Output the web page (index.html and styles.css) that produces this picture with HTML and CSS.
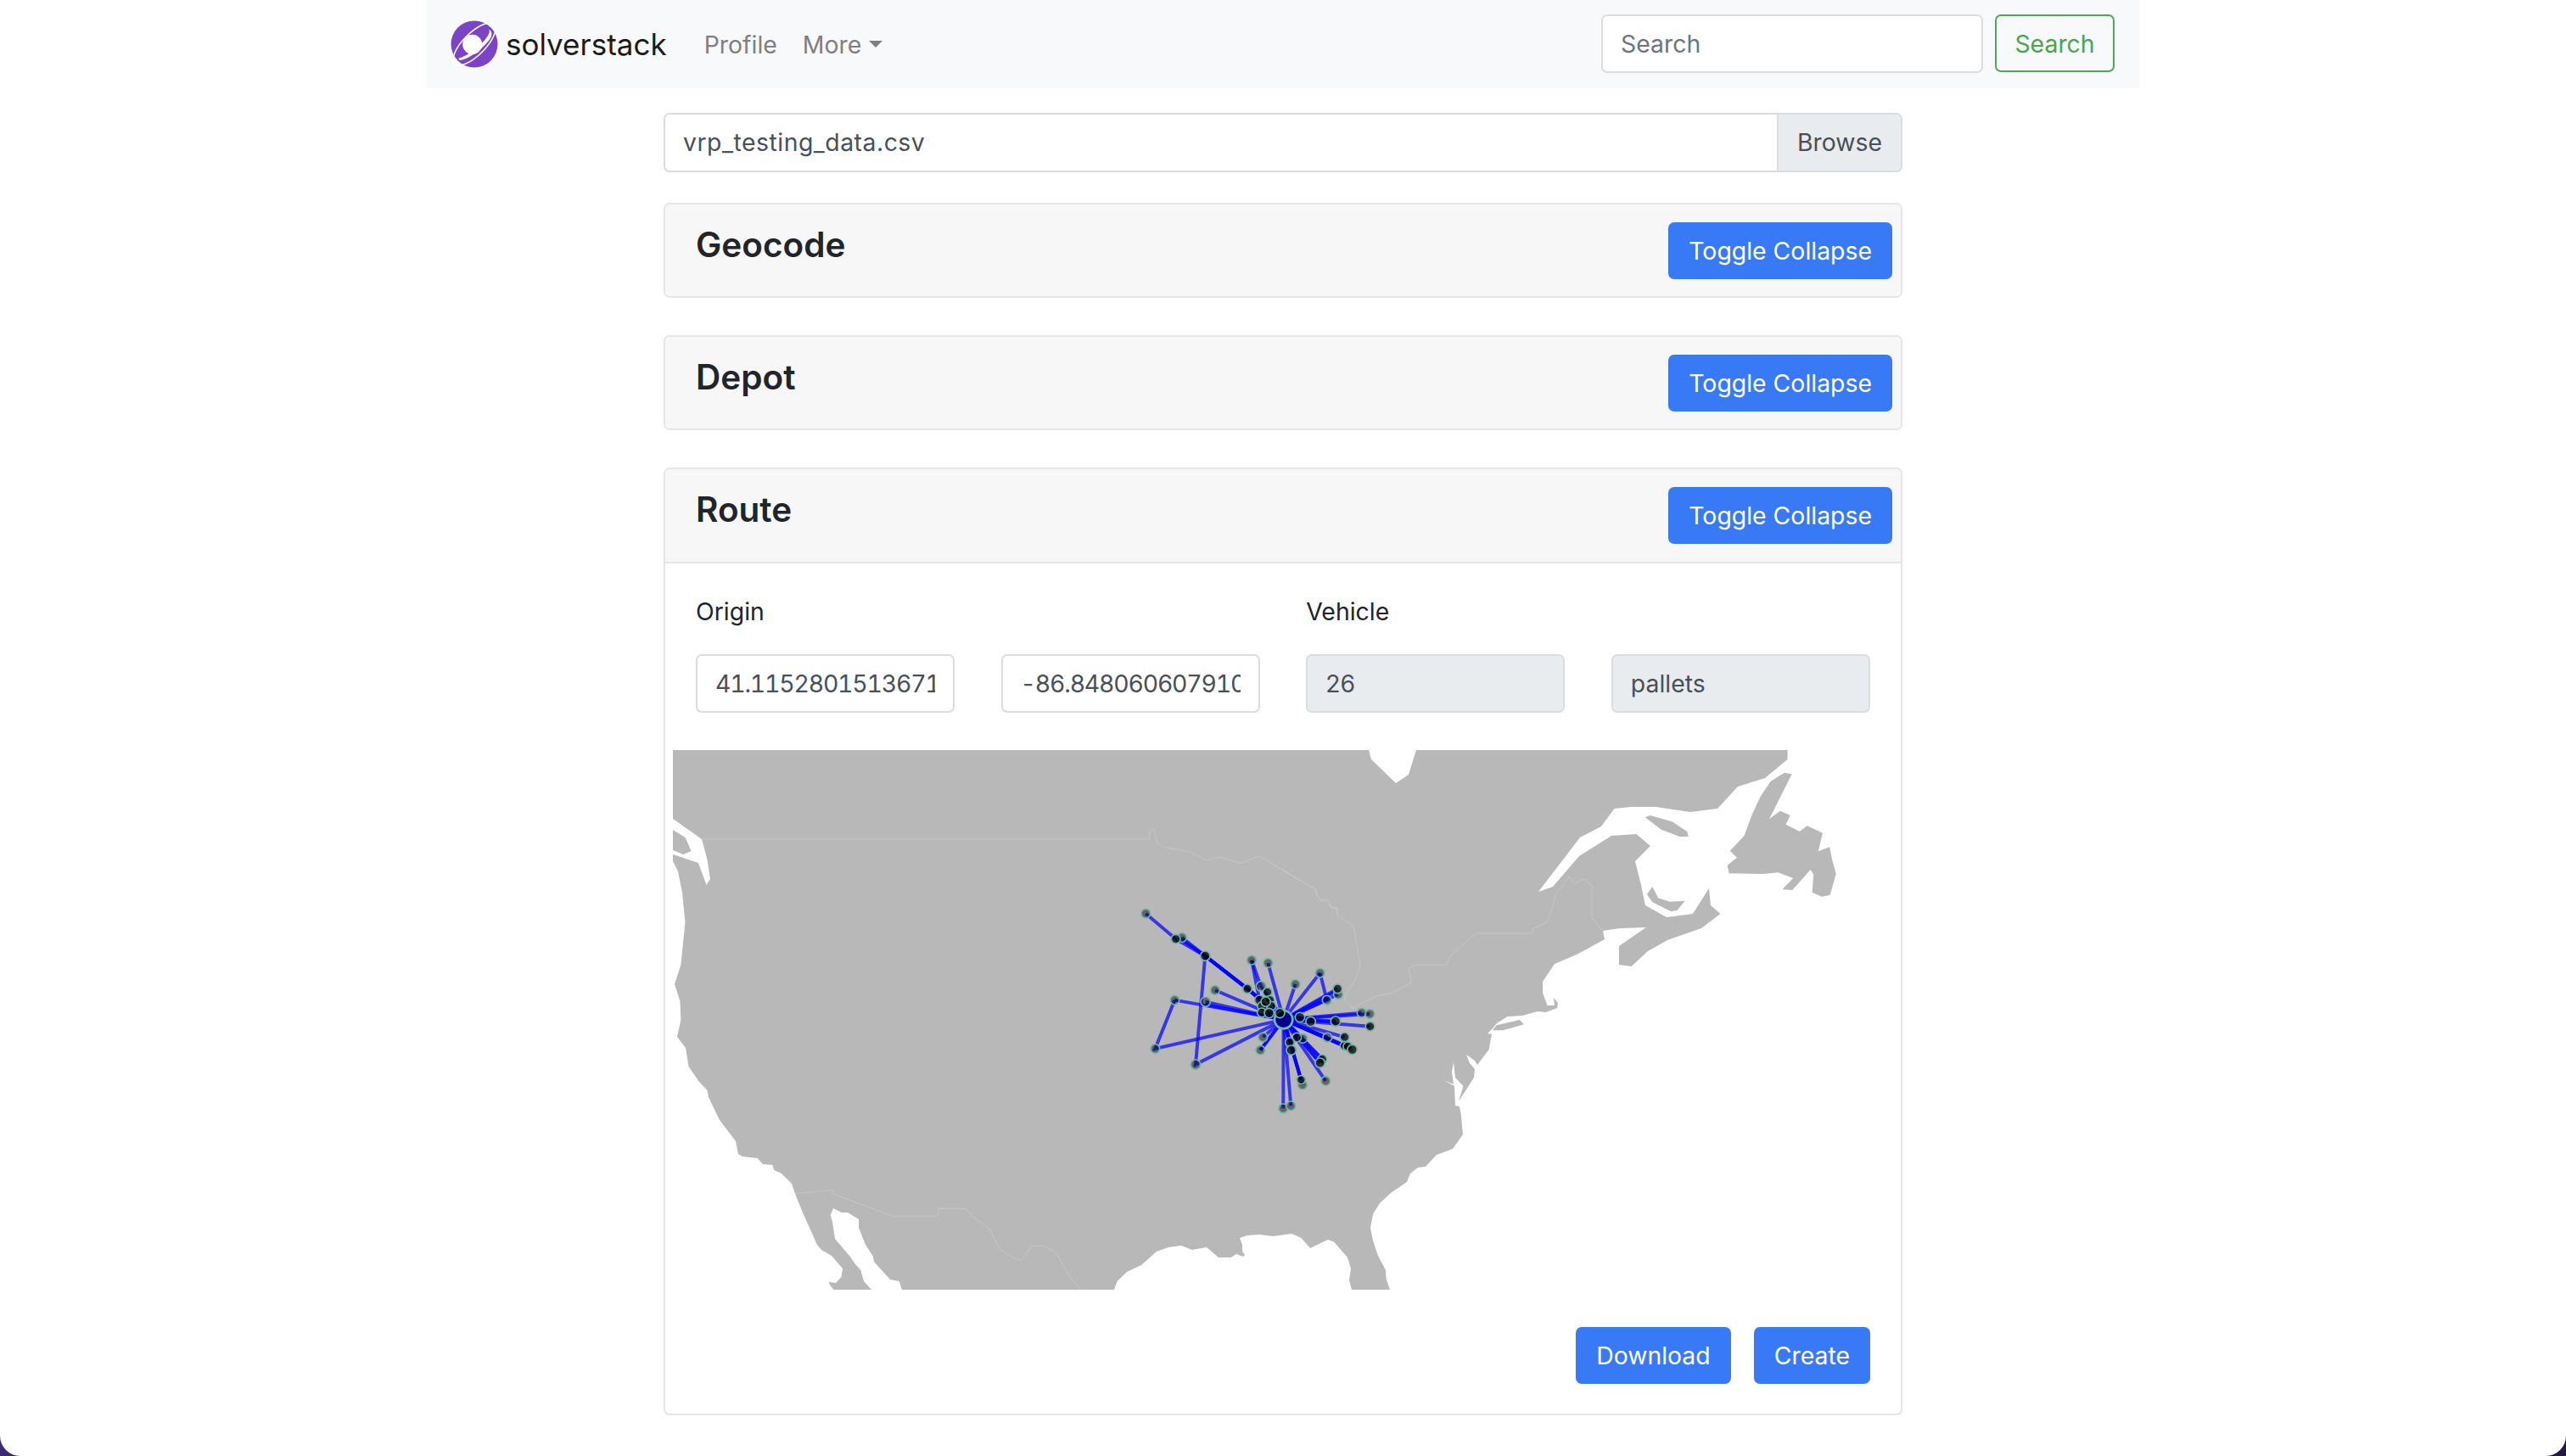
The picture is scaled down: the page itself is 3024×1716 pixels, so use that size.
FILE: index.html
```html
<!DOCTYPE html>
<html lang="en">
<head>
<meta charset="utf-8">
<title>solverstack</title>
<link rel="stylesheet" href="styles.css">
</head>
<body>
<div class="screen">
  <nav class="navbar">
    <a class="brand">
      <svg class="logo" viewBox="0 0 56 56" aria-hidden="true">
        <circle cx="28" cy="28" r="27.5" fill="#7d43c6"/>
        <ellipse cx="28" cy="28" rx="33" ry="13" transform="rotate(-45 28 28)" fill="none" stroke="#fff" stroke-width="1.6"/>
        <circle cx="25.7" cy="28.3" r="11.5" fill="#fff"/>
        <path d="M9 45 C20 42 36 31 44 18 C47 13 46 11 43 10 L47 12 C50 16 48 21 44 25 C35 36 20 46 11 47Z" fill="#fff"/>
      </svg>
      <span class="brand-name">solverstack</span>
    </a>
    <a class="nav-link">Profile</a>
    <a class="nav-link">More<span class="caret"></span></a>
    <form class="nav-search">
      <input class="field field-search" type="text" placeholder="Search">
      <button class="btn btn-outline" type="button">Search</button>
    </form>
  </nav>

  <main class="main">
    <div class="file-input">
      <span class="file-name">vrp_testing_data.csv</span>
      <span class="file-browse">Browse</span>
    </div>

    <section class="card">
      <header class="card-header">
        <h4 class="card-title">Geocode</h4>
        <button class="btn btn-primary" type="button">Toggle Collapse</button>
      </header>
    </section>

    <section class="card">
      <header class="card-header">
        <h4 class="card-title">Depot</h4>
        <button class="btn btn-primary" type="button">Toggle Collapse</button>
      </header>
    </section>

    <section class="card">
      <header class="card-header card-header-open">
        <h4 class="card-title">Route</h4>
        <button class="btn btn-primary" type="button">Toggle Collapse</button>
      </header>
      <div class="card-body">
        <div class="form-grid">
          <label class="form-label">Origin</label>
          <label class="form-label">Vehicle</label>
          <input class="field field-number" type="text" value="41.11528015136719">
          <input class="field field-number" type="text" value="-86.84806060791016">
          <input class="field" type="text" value="26" disabled>
          <input class="field" type="text" value="pallets" disabled>
        </div>

        <svg class="map" viewBox="792 884 1373 636" aria-hidden="true">
          <polygon class="land" points="792,884 1612,884 1615,895 1644,923 1659,913 1668,884 2105.6,884 2105.6,895 2079,917 2047,927 2023,953 1991,957 1950.5,951 1921,951 1901.5,953 1886,974 1861,987 1812,1051 1829,1045 1860,1009 1898,985 1927.5,983 1944,997 1926,1015 1933,1043 1938,1067 1963,1081 1994,1077 2013,1047 2015,1067 2026.5,1077 2004,1094 1964,1108 1941,1121 1921.5,1139 1907,1137 1907,1115 1939,1093 1908,1094 1888,1097 1890,1107 1872,1117 1857,1125 1831,1136 1817,1157 1817,1170 1822.5,1185 1831,1185 1830,1176 1835,1182 1834,1188 1821,1193 1811,1192 1793,1197 1775.5,1198 1763,1206 1758,1212 1752,1218 1757,1219 1753.6,1237 1740,1255 1737,1250 1727,1243 1731,1253 1737,1260 1736,1270 1718,1298 1723.5,1280 1714,1270 1712,1252 1710,1263 1712,1278 1700.5,1273 1713,1280 1714,1303 1719,1304 1720.7,1313 1723,1337 1711,1354 1692,1361 1679,1375 1670,1376 1661,1383 1657,1393 1638,1406 1625,1418 1617,1431 1614,1447 1617,1462 1623,1480 1632,1497 1632.6,1507 1637,1520 1592,1520 1589,1509 1591,1495 1587,1482 1571.5,1464 1564,1461 1543,1471 1532.5,1459 1521,1454 1499,1457 1483,1455 1469,1456 1460,1459 1463,1467 1463,1475 1466,1479 1464,1481 1456,1478 1449.6,1482 1435,1482 1421,1470 1403.7,1473 1391,1468 1376,1470 1362,1475 1344,1491 1327,1499 1315.7,1510 1312,1520 1062,1520 1058.7,1510 1048,1508 1029,1487 1027.5,1480 1019,1467 1011,1447 1011,1437 998,1429 990.5,1429 981,1424 977.7,1432 980,1440 983,1460 1000,1480 1007,1490 1013.4,1497 1017,1510 1026,1520 981.5,1520 976,1513 976,1511 984,1512 990.5,1505 992,1495 979,1480 967,1473 962,1467 944.5,1428 936,1407 932,1395 920,1383 911,1379 909.5,1373 898,1372 891.6,1365 874,1363 869,1360 866,1345 847,1320 834,1293 832.5,1285 823,1275 810.6,1257 807,1235 797,1222 801.4,1202 800.4,1180 794,1160 801.4,1137 806.5,1087 803,1052 798,1027 792,1015 792,1007 822,1017 831.5,1043 836,1036 832.5,1013 826,989 792,965"/>
          <polygon class="land" points="792,978 806.5,987 813.7,1003 804.5,1007 792,1002"/>
          <g transform="translate(1500 880) scale(.5102 .3333)">
            <polygon class="land" points="858,250 870,243 920,265 955,300 958,318 938,318 895,293"/>
            <polygon class="land" points="875,495 888,535 915,548 950,545 932,578 918,583 875,550 862,522"/>
            <polygon class="land" points="1180,92 1197,97 1145,255 1170,227 1193,243 1183,275 1215,300 1232,280 1268,305 1258,370 1284,355 1290,400 1299,450 1285,525 1266,530 1244,515 1247,452 1240,435 1198,507 1175,505 1200,465 1165,445 1130,450 1052,448 1048,420 1070,392 1054,368 1087,315 1105,240 1125,175 1148,122"/>
            <polygon class="land" points="505,1003 530,1003 578,982 568,966 515,985"/>
            <polyline class="border" points="0,418 98,505 100,525 110,545 125,540 130,565 148,572 146,595 185,635 200,775 188,825 165,880 165,900 183,925 235,882 268,873 318,835 312,785 327,772 398,772 410,738 455,675 470,660 597,660 600,642 630,622 640,590 652,522 682,460 695,482 717,468 735,490 735,605 760,652"/>
          </g>
          <g transform="translate(780 880) scale(.5102 .3333)">
            <polyline class="border" points="90,327 1125,327 1125,295 1135,293 1143,340 1155,355 1218,372 1255,402 1287,390 1335,412 1378,387 1508,505 1510,525 1523,547 1535,540 1545,570 1557,573 1560,600"/>
          </g>
          <g transform="translate(780 1280) scale(.6378 .3333)">
            <polyline class="border" points="245,380 315,368 313,380 425,460 508,460 510,433 560,433 575,465 605,508 622,575 638,597 662,617 682,565 706,565 728,592 752,675 765,700 771,720"/>
          </g>
          <g transform="translate(1300 1040) scale(.3333)">
            <g class="routes">
              <path d="M148 110L254 200L358 260L507 376L635 485"/>
              <path d="M276 195L358 260L507 376L635 485"/>
              <path d="M265 195L358 260L507 376L635 485"/>
              <path d="M358 260L324 644L635 485"/>
              <path d="M358 260L520 385L635 485"/>
              <path d="M522 275L555 367L635 485"/>
              <path d="M522 275L550 416"/>
              <path d="M580 285L635 485"/>
              <path d="M677 360L635 485"/>
              <path d="M764 320L635 485"/>
              <path d="M764 320L788 416L635 485"/>
              <path d="M393 381L635 485"/>
              <path d="M359 422L635 485"/>
              <path d="M359 432L635 485"/>
              <path d="M250 416L635 485"/>
              <path d="M250 416L181 588L635 485"/>
              <path d="M826 376L635 485"/>
              <path d="M828 396L635 485"/>
              <path d="M820 385L635 485"/>
              <path d="M911 461L635 485"/>
              <path d="M940 465L635 485"/>
              <path d="M941 509L635 485"/>
              <path d="M819 491L635 485"/>
              <path d="M819 491L635 485"/>
              <path d="M731 492L635 485"/>
              <path d="M693 477L635 485"/>
              <path d="M851 547L635 485"/>
              <path d="M878 591L635 485"/>
              <path d="M878 591L635 485"/>
              <path d="M862 580L635 485"/>
              <path d="M850 578L635 485"/>
              <path d="M790 548L635 485"/>
              <path d="M772 625L635 485"/>
              <path d="M772 625L635 485"/>
              <path d="M764 638L635 485"/>
              <path d="M764 638L635 485"/>
              <path d="M703 552L635 485"/>
              <path d="M784 702L635 485"/>
              <path d="M697 698L635 485"/>
              <path d="M697 698L635 485"/>
              <path d="M702 716L635 485"/>
              <path d="M634 799L635 485"/>
              <path d="M661 790L635 485"/>
              <path d="M562 547L635 485"/>
              <path d="M553 593L635 485"/>
              <path d="M553 593L635 485"/>
              <path d="M600 470L635 485"/>
              <path d="M560 450L635 485"/>
              <path d="M585 440L635 485"/>
              <path d="M560 430L635 485"/>
            </g>
            <circle class="depot" cx="635" cy="485" r="32"/>
            <g class="nodes">
              <circle cx="148" cy="110" r="16"/>
              <circle cx="276" cy="195" r="16"/>
              <circle cx="522" cy="275" r="16"/>
              <circle cx="580" cy="285" r="16"/>
              <circle cx="764" cy="320" r="16"/>
              <circle cx="677" cy="360" r="16"/>
              <circle cx="393" cy="381" r="16"/>
              <circle cx="250" cy="416" r="16"/>
              <circle cx="359" cy="422" r="17"/>
              <circle cx="555" cy="367" r="17"/>
              <circle cx="828" cy="396" r="16"/>
              <circle cx="788" cy="416" r="16"/>
              <circle cx="911" cy="461" r="16"/>
              <circle cx="940" cy="465" r="16"/>
              <circle cx="790" cy="548" r="16"/>
              <circle cx="703" cy="552" r="16"/>
              <circle cx="562" cy="547" r="16"/>
              <circle cx="553" cy="593" r="16"/>
              <circle cx="784" cy="702" r="16"/>
              <circle cx="634" cy="799" r="16"/>
              <circle cx="661" cy="790" r="16"/>
              <circle cx="181" cy="588" r="16"/>
              <circle cx="324" cy="644" r="17"/>
              <circle cx="702" cy="716" r="16"/>
            </g>
            <g class="nodes nodes-dark">
              <circle cx="254" cy="200" r="16"/>
              <circle cx="358" cy="260" r="17"/>
              <circle cx="507" cy="376" r="16"/>
              <circle cx="578" cy="388" r="16"/>
              <circle cx="550" cy="416" r="17"/>
              <circle cx="587" cy="416" r="16"/>
              <circle cx="592" cy="437" r="16"/>
              <circle cx="560" cy="438" r="17"/>
              <circle cx="558" cy="460" r="16"/>
              <circle cx="572" cy="422" r="17"/>
              <circle cx="584" cy="462" r="17"/>
              <circle cx="622" cy="462" r="17"/>
              <circle cx="826" cy="376" r="16"/>
              <circle cx="693" cy="477" r="17"/>
              <circle cx="731" cy="492" r="17"/>
              <circle cx="819" cy="491" r="17"/>
              <circle cx="941" cy="509" r="16"/>
              <circle cx="851" cy="547" r="16"/>
              <circle cx="682" cy="548" r="16"/>
              <circle cx="657" cy="565" r="16"/>
              <circle cx="662" cy="593" r="17"/>
              <circle cx="772" cy="625" r="16"/>
              <circle cx="764" cy="638" r="17"/>
              <circle cx="697" cy="698" r="15"/>
              <circle cx="850" cy="578" r="15"/>
              <circle cx="862" cy="580" r="16"/>
              <circle cx="878" cy="591" r="17"/>
            </g>
          </g>
        </svg>

        <div class="actions">
          <button class="btn btn-primary" type="button">Download</button>
          <button class="btn btn-primary" type="button">Create</button>
        </div>
      </div>
    </section>
  </main>
</div>
</body>
</html>
```
FILE: styles.css
```css
* { box-sizing: border-box; }

html, body { margin: 0; padding: 0; }

body {
  background: linear-gradient(90deg, #3d2a74 0, #241a44 100%);
  font-family: Inter, "Liberation Sans", sans-serif;
  font-size: 28.4px;
  color: #212529;
}

.screen {
  height: 1716px;
  overflow: hidden;
  background: #fff;
  border-radius: 0 0 24px 24px;
}

.navbar {
  width: 2018px;
  height: 104px;
  margin: 0 auto;
  padding: 0 29px 0 28px;
  display: flex;
  align-items: center;
  background: #f8f9fa;
}

.brand {
  display: flex;
  align-items: center;
  gap: 9px;
  margin-right: 44px;
}

.logo { width: 56px; height: 56px; display: block; }

.brand-name { font-size: 35px; color: #1b1b1b; }

.nav-link {
  margin-right: 30px;
  color: #7f7f7f;
  display: flex;
  align-items: center;
}

.caret {
  width: 0;
  height: 0;
  margin-left: 9px;
  border-top: 8px solid #7f7f7f;
  border-left: 8px solid transparent;
  border-right: 8px solid transparent;
}

.nav-search {
  margin-left: auto;
  margin-bottom: 1px;
  display: flex;
  gap: 14px;
}

.field {
  width: 100%;
  height: 69px;
  padding: 0 21px;
  border: 2px solid #dadce0;
  border-radius: 7px;
  background: #fff;
  color: #495057;
  font: inherit;
  outline: none;
}

.field-number {
  font-variant-numeric: tabular-nums;
  letter-spacing: -1.2px;
}

.field::placeholder { color: #6c757d; opacity: 1; }

.field:disabled { background: #e9ecef; color: #495057; opacity: 1; }

.field-search { width: 450px; }

.btn {
  height: 67px;
  padding: 0 22px;
  border: 2px solid transparent;
  border-radius: 7px;
  font: inherit;
  white-space: nowrap;
}

.btn-primary { background: #387af6; color: #fff; }

.btn-outline {
  width: 141px;
  height: 68px;
  padding: 0;
  background: transparent;
  border-color: #52a656;
  color: #4aa450;
}

.main {
  width: 1460px;
  margin: 0 auto;
  padding-top: 29px;
}

.file-input {
  height: 70px;
  margin-bottom: 36px;
  display: flex;
  border: 2px solid #dadce0;
  border-radius: 7px;
  overflow: hidden;
  color: #495057;
}

.file-name {
  flex: 1;
  padding: 0 21px;
  line-height: 66px;
  letter-spacing: .5px;
}

.file-browse {
  padding: 0 22px;
  line-height: 66px;
  background: #e9ecef;
  border-left: 2px solid #dadce0;
}

.card {
  margin-bottom: 44px;
  border: 2px solid #e6e6e6;
  border-radius: 7px;
  overflow: hidden;
  background: #fff;
}

.card-header {
  padding: 21px 10px 20px 36px;
  display: flex;
  justify-content: space-between;
  align-items: flex-start;
  background: #f7f7f7;
}

.card-header-open {
  padding-bottom: 21px;
  border-bottom: 2px solid #e6e6e6;
}

.card-title {
  margin: 0;
  padding-top: 1px;
  font-size: 40.5px;
  font-weight: 600;
  line-height: 52px;
  color: #212529;
}

.card-body { padding: 36px 36px 35px; }

.form-grid {
  display: grid;
  grid-template-columns: repeat(4, 305px);
  column-gap: 54.6px;
  row-gap: 29px;
}

.form-label {
  grid-column: span 2;
  line-height: 42px;
}

.map {
  display: block;
  width: 1373px;
  height: 636px;
  margin: 44px 0 0 -27px;
}

.land { fill: #b8b8b8; }

.border {
  fill: none;
  stroke: #c6c6c6;
  stroke-width: 1;
  vector-effect: non-scaling-stroke;
}

.routes path {
  fill: none;
  stroke: #0000ff;
  stroke-width: 12;
  stroke-opacity: .7;
}

.depot {
  fill: #00008c;
  stroke: #6fb6a4;
  stroke-width: 8;
}

.nodes circle {
  fill: #000;
  fill-opacity: .45;
  stroke: #6fb6a4;
  stroke-width: 5;
}

.nodes-dark circle { fill-opacity: .75; }

.actions {
  margin-top: 44px;
  display: flex;
  justify-content: flex-end;
  gap: 27px;
}
```
